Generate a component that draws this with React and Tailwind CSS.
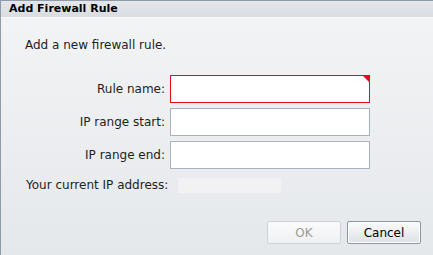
export default function App() {
  const fields = ['Rule name:', 'IP range start:', 'IP range end:'];
  return (
    <div
      className="w-[433px] h-[255px] flex flex-col border-t border-l border-[#8e9ba8] bg-gradient-to-b from-[#f3f4f6] to-[#e5e8eb] text-[#1e1e1e] overflow-hidden"
      style={{ fontFamily: 'Tahoma, "DejaVu Sans", Verdana, sans-serif' }}
    >
      <div className="h-[17px] flex items-center pl-[8px] bg-gradient-to-b from-[#e4e7ea] to-[#d9dde1] border-b border-[#f7f8f9]">
        <span className="text-[11px] font-bold text-black">Add Firewall Rule</span>
      </div>
      <div className="pl-[24px] pt-[18px] text-[12px]">Add a new firewall rule.</div>
      <div className="flex flex-col gap-[5px] mt-[21px]">
        {fields.map((f, i) => (
          <div key={f} className="flex items-center">
            <div className="w-[169px] text-right pr-[5px] text-[12px]">{f}</div>
            <div
              className={
                'relative w-[200px] h-[28px] bg-white border ' +
                (i === 0 ? 'border-[#e0101a]' : 'border-[#a8b3bd]')
              }
            >
              {i === 0 && (
                <div className="absolute top-0 right-0 w-0 h-0 border-t-[6px] border-l-[6px] border-t-[#e0101a] border-l-transparent" />
              )}
            </div>
          </div>
        ))}
      </div>
      <div className="flex items-center mt-[7px] pl-[25px] text-[12px]">
        <span className="w-[152px]">Your current IP address:</span>
        <div className="w-[103px] h-[15px] bg-[#f2f2f2]" />
      </div>
      <div className="flex justify-end gap-[6px] mt-[27px] pr-[12px]">
        <button className="w-[74px] h-[23px] rounded-[2px] border border-[#cdd3d8] bg-gradient-to-b from-[#fbfbfc] to-[#eef0f2] text-[12px] text-[#9a9a9a]">
          OK
        </button>
        <button className="w-[74px] h-[23px] rounded-[2px] border border-[#8c96a0] bg-gradient-to-b from-[#fafbfc] to-[#dde1e5] text-[12px] text-black shadow-[inset_0_0_0_1px_#ffffff]">
          Cancel
        </button>
      </div>
    </div>
  );
}
